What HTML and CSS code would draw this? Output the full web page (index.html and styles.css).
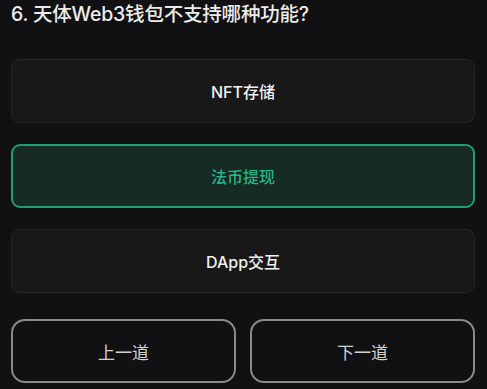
FILE: index.html
```html
<!DOCTYPE html>
<html lang="zh">
<head>
<meta charset="utf-8">
<link rel="stylesheet" href="styles.css">
</head>
<body>
<div class="quiz">
  <h1 class="question">6. 天体Web3钱包不支持哪种功能?</h1>
  <div class="options">
    <div class="option">NFT存储</div>
    <div class="option selected">法币提现</div>
    <div class="option">DApp交互</div>
  </div>
  <div class="nav">
    <button class="nav-btn">上一道</button>
    <button class="nav-btn">下一道</button>
  </div>
</div>
</body>
</html>
```
FILE: styles.css
```css
html, body {
  margin: 0;
  padding: 0;
  background: #111113;
}
body {
  font-family: Inter, "Noto Sans CJK SC", sans-serif;
  color: #f2f2f2;
  width: 487px;
  height: 389px;
  overflow: hidden;
}
.quiz {
  padding: 0 12px 0 11px;
  display: flex;
  flex-direction: column;
}
.question {
  margin: 0 0 31px 0;
  font-size: 19.5px;
  line-height: 28px;
  font-weight: 500;
  color: #ececec;
  letter-spacing: -0.2px;
}
.options {
  display: flex;
  flex-direction: column;
  gap: 21px;
}
.option {
  height: 64px;
  box-sizing: border-box;
  border: 1.5px solid #262627;
  border-radius: 9px;
  background: #181819;
  display: flex;
  align-items: center;
  justify-content: center;
  font-size: 16px;
  font-weight: 500;
  color: #f0f0f0;
}
.option.selected {
  border: 2px solid #1f9e76;
  background: #182a24;
  color: #26b585;
}
.nav {
  margin-top: 26px;
  display: grid;
  grid-template-columns: 1fr 1fr;
  gap: 14px;
}
.nav-btn {
  height: 64px;
  box-sizing: border-box;
  border: 2px solid #8a8a8c;
  border-radius: 14px;
  background: transparent;
  font-family: inherit;
  font-size: 17px;
  color: #d2d2d2;
  cursor: pointer;
}
```
